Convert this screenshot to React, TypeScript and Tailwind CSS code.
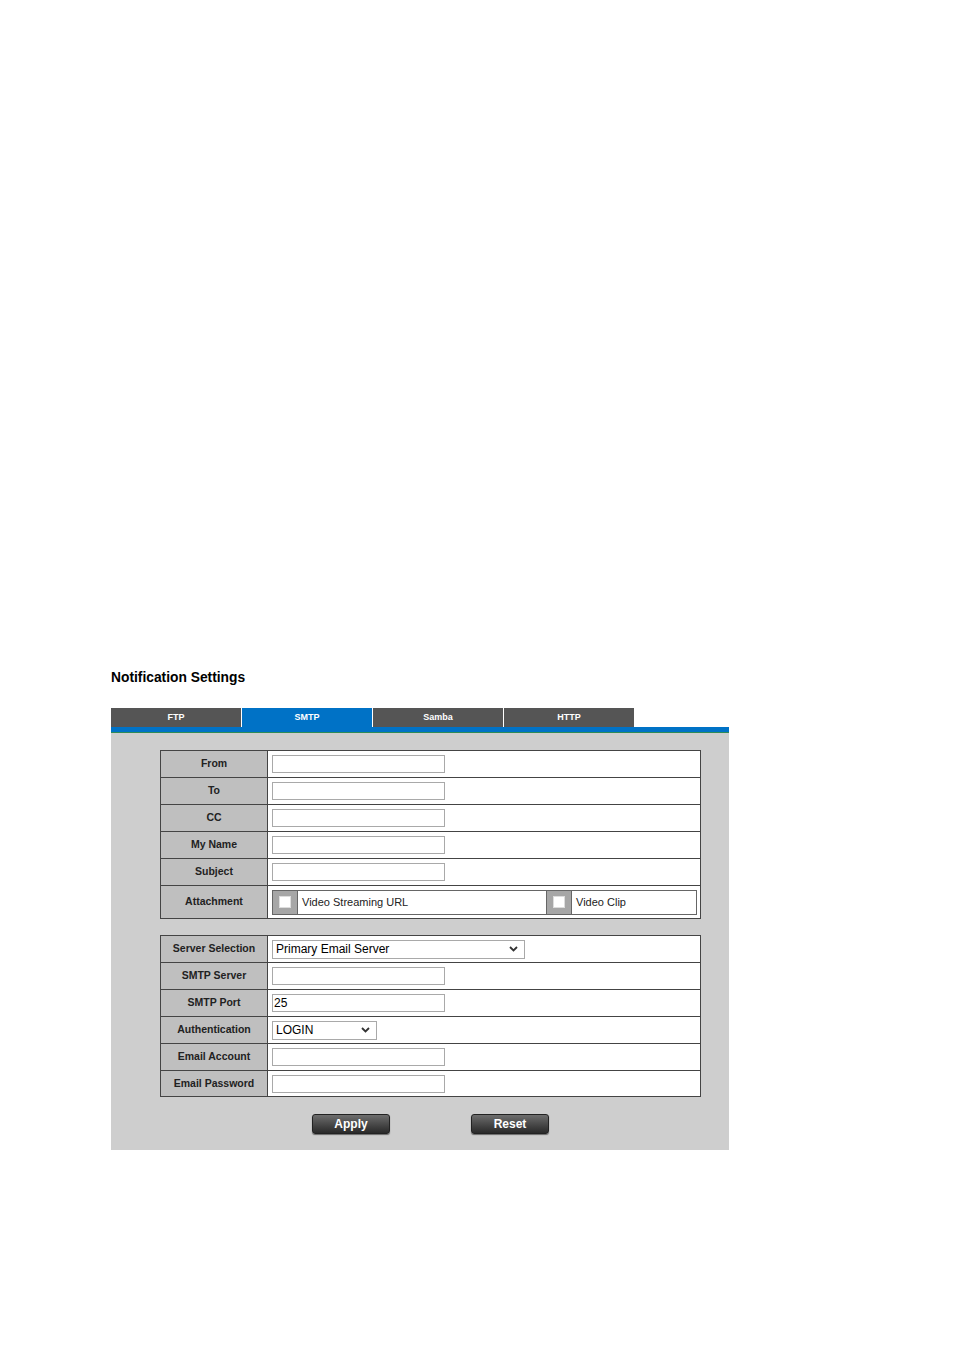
import React from 'react';

const font = { fontFamily: '"Liberation Sans", Arial, sans-serif' };

const tabs = ['FTP', 'SMTP', 'Samba', 'HTTP'];

const TextBox = ({ value = '' }: { value?: string }) => (
  <div className="h-[18px] w-[173px] border border-[#a9a9a9] bg-white px-[1px] text-[12px] leading-[16px] text-black">
    {value}
  </div>
);

const Select = ({ value, width }: { value: string; width: string }) => (
  <div
    className={`flex h-[19px] ${width} items-center justify-between border border-[#a9a9a9] bg-white pl-[3px] pr-[6px] text-[12px] text-black`}
  >
    <span>{value}</span>
    <svg width="9" height="6" viewBox="0 0 9 6">
      <path d="M1 1l3.5 3.5L8 1" fill="none" stroke="#333" strokeWidth="1.8" />
    </svg>
  </div>
);

const Row = ({
  label,
  children,
  last = false,
  tall = false,
}: {
  label: string;
  children: React.ReactNode;
  last?: boolean;
  tall?: boolean;
}) => (
  <div className={`flex ${tall ? 'h-[32px]' : last ? 'h-[25px]' : 'h-[27px]'} ${last ? '' : 'border-b border-[#444]'}`}>
    <div className="flex w-[107px] shrink-0 items-center justify-center border-r border-[#444] bg-[#bfbfbf] text-[10.5px] font-bold text-[#222]">
      {label}
    </div>
    <div className="flex flex-1 items-center bg-white pl-[4px]">{children}</div>
  </div>
);

const CheckCell = ({ label, width }: { label: string; width: string }) => (
  <div className={`flex h-full ${width} items-stretch`}>
    <div className="flex w-[25px] items-center justify-center border-r border-[#666] bg-[#a6a6a6]">
      <div className="h-[12px] w-[12px] border border-[#ddd] bg-white" />
    </div>
    <div className="flex items-center pl-[4px] text-[11px] text-[#222]">{label}</div>
  </div>
);

const Button = ({ label }: { label: string }) => (
  <div className="flex h-[20px] w-[78px] items-center justify-center rounded-[3px] border border-[#222] bg-gradient-to-b from-[#6e6e6e] via-[#4a4a4a] to-[#2a2a2a] text-[12px] font-bold text-white shadow-[0_1px_1px_rgba(0,0,0,0.5)]">
    {label}
  </div>
);

export default function App() {
  return (
    <div className="min-h-[1350px] w-[954px] bg-white pl-[111px] pt-[669px]" style={font}>
      <h1 className="text-[13.8px] font-bold leading-[18px] text-black">Notification Settings</h1>

      <div className="mt-[21px] flex">
        {tabs.map((t, i) => (
          <div
            key={t}
            className={`flex h-[19px] w-[130px] items-center justify-center text-[9px] font-bold text-white ${
              i === 1 ? 'bg-[#0072c6]' : 'bg-[#555555]'
            } ${i > 0 ? 'ml-[1px]' : ''}`}
          >
            {t}
          </div>
        ))}
      </div>
      <div className="h-[6px] w-[618px] border-b border-[#2e8b57] bg-[#0072c6]" />

      <div className="w-[618px] bg-[#cecece] pb-[16px] pl-[49px] pt-[17px]">
        <div className="w-[541px] border border-[#444]">
          <Row label="From">
            <TextBox />
          </Row>
          <Row label="To">
            <TextBox />
          </Row>
          <Row label="CC">
            <TextBox />
          </Row>
          <Row label="My Name">
            <TextBox />
          </Row>
          <Row label="Subject">
            <TextBox />
          </Row>
          <Row label="Attachment" last tall>
            <div className="my-[4px] mr-[3px] flex h-[25px] flex-1 border border-[#666]">
              <CheckCell label="Video Streaming URL" width="w-[273px]" />
              <div className="w-px bg-[#666]" />
              <CheckCell label="Video Clip" width="flex-1" />
            </div>
          </Row>
        </div>

        <div className="mt-[16px] w-[541px] border border-[#444]">
          <Row label="Server Selection">
            <Select value="Primary Email Server" width="w-[253px]" />
          </Row>
          <Row label="SMTP Server">
            <TextBox />
          </Row>
          <Row label="SMTP Port">
            <TextBox value="25" />
          </Row>
          <Row label="Authentication">
            <Select value="LOGIN" width="w-[105px]" />
          </Row>
          <Row label="Email Account">
            <TextBox />
          </Row>
          <Row label="Email Password" last>
            <TextBox />
          </Row>
        </div>

        <div className="mt-[17px] flex gap-[81px] pl-[152px]">
          <Button label="Apply" />
          <Button label="Reset" />
        </div>
      </div>
    </div>
  );
}
